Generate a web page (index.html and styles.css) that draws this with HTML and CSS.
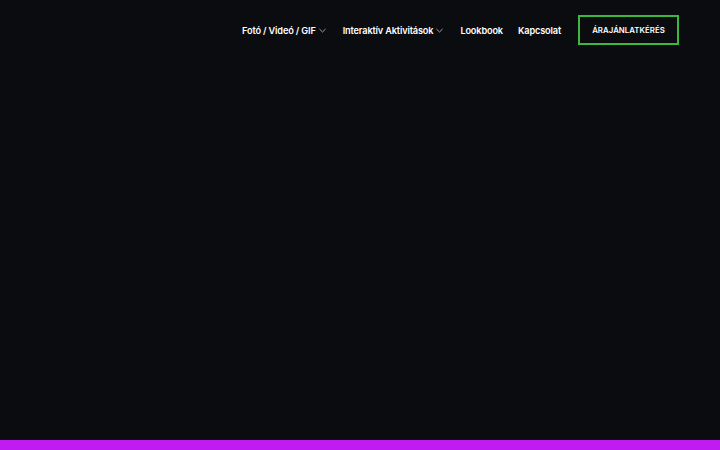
FILE: index.html
```html
<!DOCTYPE html>
<html lang="hu">
<head>
<meta charset="utf-8">
<title>Menu</title>
<link rel="stylesheet" href="styles.css">
</head>
<body>
<div class="page">
  <header class="header">
    <nav class="nav">
      <a class="nav-item" href="#">Fotó / Videó / GIF<svg class="chev" viewBox="0 0 8 5" width="7" height="5"><path d="M0.5 0.8 L4 4.2 L7.5 0.8" fill="none" stroke="#c9cad0" stroke-width="0.9"/></svg></a>
      <a class="nav-item" href="#">Interaktív Aktivitások<svg class="chev" viewBox="0 0 8 5" width="7" height="5"><path d="M0.5 0.8 L4 4.2 L7.5 0.8" fill="none" stroke="#c9cad0" stroke-width="0.9"/></svg></a>
      <a class="nav-item nav-item-tight" href="#">Lookbook</a>
      <a class="nav-item" href="#">Kapcsolat</a>
      <a class="cta" href="#">ÁRAJÁNLATKÉRÉS</a>
    </nav>
  </header>
  <main class="main"></main>
  <div class="bottom-bar"></div>
</div>
</body>
</html>
```

FILE: styles.css
```css
html, body {
  margin: 0;
  padding: 0;
  background: #0b0c10;
}
.page {
  width: 720px;
  height: 450px;
  display: flex;
  flex-direction: column;
  background: #0b0c10;
  font-family: "Inter", "Open Sans", sans-serif;
}
.header {
  height: 60px;
  display: flex;
  align-items: center;
  justify-content: flex-end;
  padding-right: 41px;
  box-sizing: border-box;
}
.nav {
  display: flex;
  align-items: center;
}
.nav-item {
  color: #ffffff;
  text-decoration: none;
  font-size: 9.2px;
  font-weight: 600;
  letter-spacing: -0.15px;
  margin-right: 17px;
  display: flex;
  align-items: center;
  white-space: nowrap;
}
.nav-item-tight {
  margin-right: 15px;
}
.chev {
  margin-left: 3px;
}
.cta {
  display: flex;
  align-items: center;
  justify-content: center;
  width: 101px;
  height: 30px;
  box-sizing: border-box;
  border: 2px solid #3cb83c;
  color: #ffffff;
  text-decoration: none;
  font-size: 7.8px;
  font-weight: 600;
  letter-spacing: 0.05px;
}
.main {
  flex: 1;
}
.bottom-bar {
  height: 10px;
  background: #c01cf2;
}
```
